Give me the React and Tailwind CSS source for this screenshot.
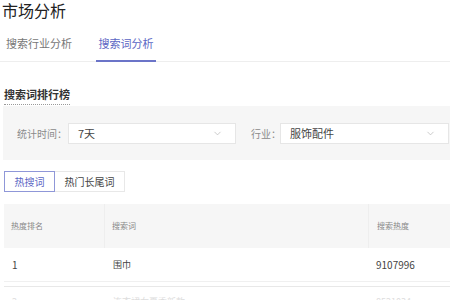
import { ChevronDown } from "lucide-react";

const font = { fontFamily: '"Noto Sans CJK SC", "Noto Sans", sans-serif' };

const Select = ({ value, width }) => (
  <div className={`${width} shrink-0 h-[21px] bg-white border border-[#e6e6e6] flex items-center justify-between pl-[9px] pr-[12px]`}>
    <span className="text-[11px] text-[#444]">{value}</span>
    <ChevronDown className="w-[11px] h-[11px] text-[#b5b5b5]" strokeWidth={1.5} />
  </div>
);

const App = () => {
  return (
    <div className="w-[450px] h-[300px] overflow-hidden bg-white text-[#333]" style={font}>
      <div className="h-[22px] pl-[2px] text-[16px] leading-[21px] text-[#222]">市场分析</div>

      <div className="h-[40px] border-b border-[#eeeeee] flex items-end text-[11px]">
        <div className="pl-[6px] w-[96px] h-[36px] flex items-center text-[#777]">搜索行业分析</div>
        <div className="w-[60px] h-[36px] flex items-center justify-center text-[#5b66c4] border-b-2 border-[#6b74c8] mb-[-1px]">
          搜索词分析
        </div>
      </div>

      <div className="h-[44px] pl-[4px] pt-[18px]">
        <span className="text-[11px] font-bold text-[#333] leading-[14px] pb-[2px] border-b border-dotted border-[#999]">搜索词排行榜</span>
      </div>

      <div className="ml-[3px] h-[54px] bg-[#f6f6f6] flex items-center">
        <span className="pl-[14px] w-[65px] shrink-0 whitespace-nowrap text-[10px] text-[#8a8a8a]">统计时间：</span>
        <Select value="7天" width="w-[168px]" />
        <span className="ml-[15px] w-[29px] shrink-0 whitespace-nowrap text-[10px] text-[#8a8a8a]">行业：</span>
        <Select value="服饰配件" width="w-[169px]" />
      </div>

      <div className="ml-[4px] mt-[11px] flex text-[10px]">
        <div className="w-[51px] h-[21px] border border-[#8f97d8] text-[#5b66c4] flex items-center justify-center">热搜词</div>
        <div className="w-[70px] h-[21px] border border-l-0 border-[#e8e8e8] text-[#444] flex items-center justify-center">热门长尾词</div>
      </div>

      <div className="ml-[4px] mt-[12px]">
        <div className="h-[44px] bg-[#f6f6f6] flex text-[8px] text-[#888]">
          <div className="w-[101px] border-r border-[#eeeeee] flex items-center pl-[7px]">热度排名</div>
          <div className="w-[264px] border-r border-[#eeeeee] flex items-center pl-[7px]">搜索词</div>
          <div className="flex-1 flex items-center pl-[8px]">搜索热度</div>
        </div>
        <div className="h-[34px] flex text-[10px] text-[#444] border-b border-[#f0f0f0]">
          <div className="w-[101px] flex items-center pl-[8px]">1</div>
          <div className="w-[264px] flex items-center pl-[8px] text-[9px]">围巾</div>
          <div className="flex-1 flex items-center pl-[7px]">9107996</div>
        </div>
        <div className="mt-[4px] border-t border-[#e8e8e8] h-[34px] flex text-[9px] text-[#ddd] pt-[8px]">
          <div className="w-[101px] pl-[8px]">2</div>
          <div className="w-[264px] pl-[8px]">连衣裙女夏季新款</div>
          <div className="flex-1 pl-[7px]">8521034</div>
        </div>
      </div>
    </div>
  );
};

export default App;
